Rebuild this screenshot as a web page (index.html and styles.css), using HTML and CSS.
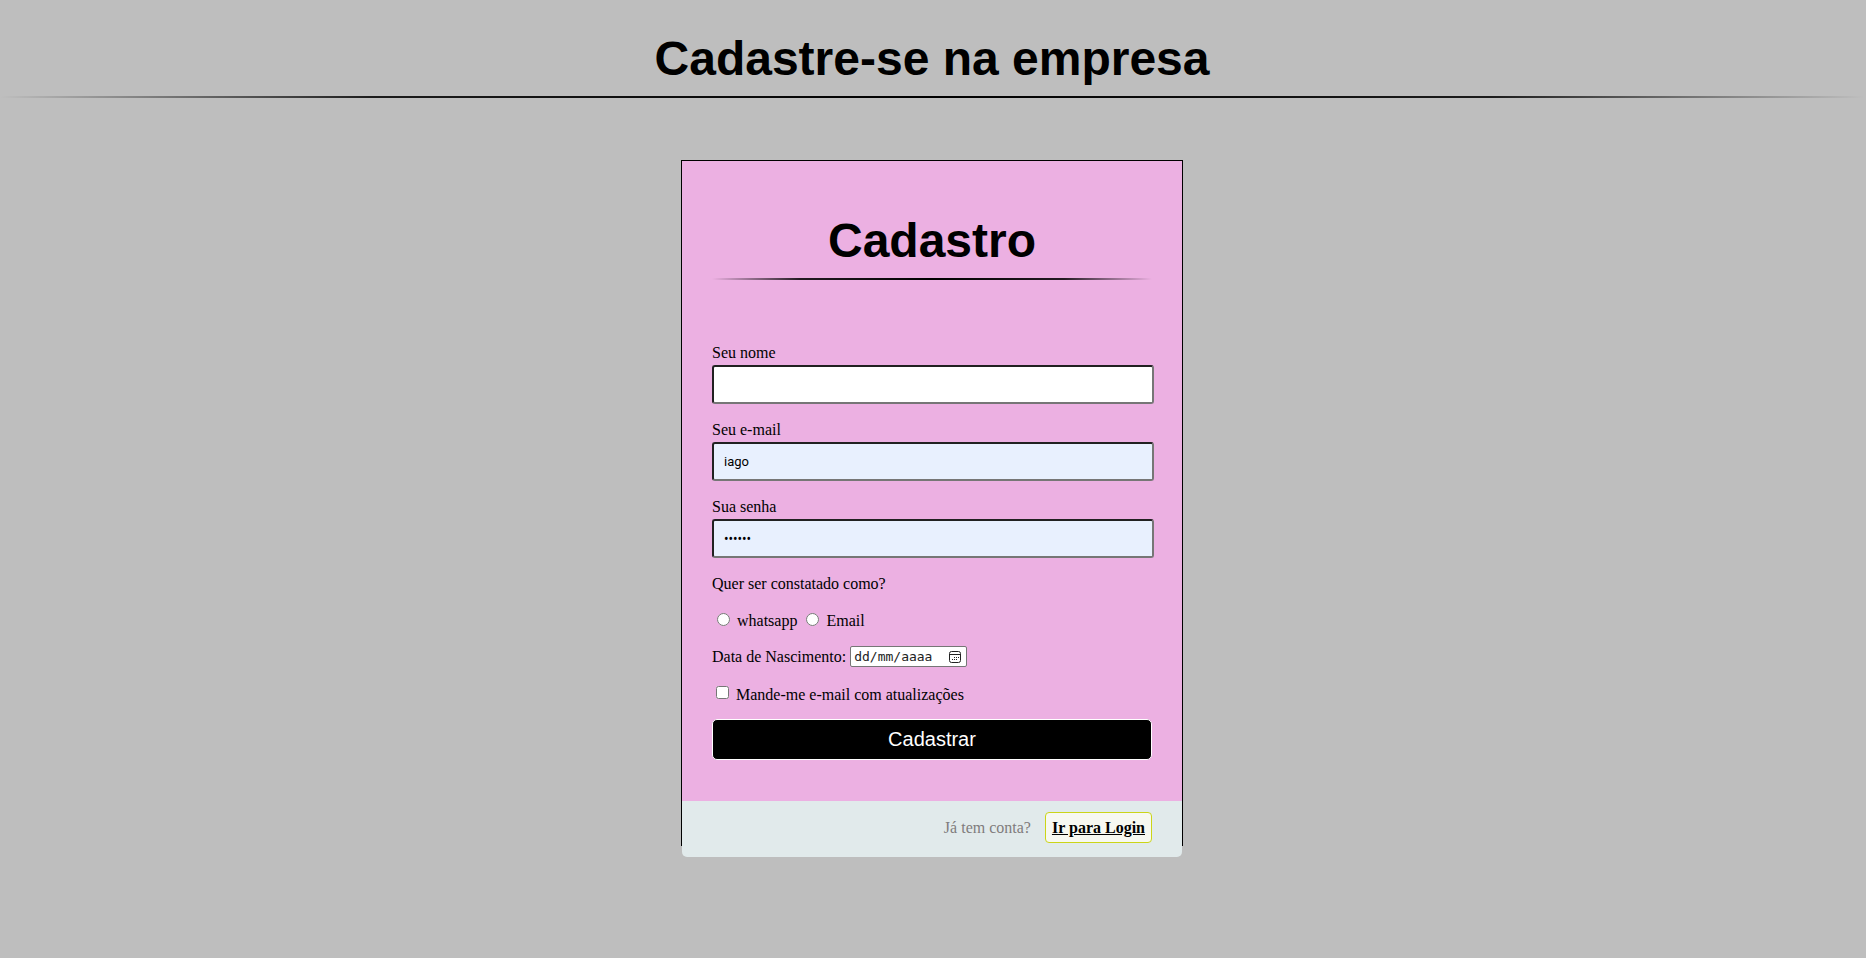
FILE: index.html
```html
<!DOCTYPE html>
<html lang="pt-BR">
<head>
<meta charset="utf-8">
<title>Cadastro</title>
<link rel="stylesheet" href="styles.css">
</head>
<body>
<header class="page-header">
  <h1 class="title">Cadastre-se na empresa</h1>
</header>
<main class="card">
  <form class="form">
    <h1 class="title form-title">Cadastro</h1>
    <div class="field">
      <label for="nome">Seu nome</label>
      <input class="text-input" id="nome" type="text">
    </div>
    <div class="field">
      <label for="email">Seu e-mail</label>
      <input class="text-input filled" id="email" type="text" value="iago">
    </div>
    <div class="field">
      <label for="senha">Sua senha</label>
      <input class="text-input filled password" id="senha" type="password" value="123456">
    </div>
    <p class="question">Quer ser constatado como?</p>
    <div class="row radios">
      <input class="choice" type="radio" id="whatsapp" name="contato"><label for="whatsapp">whatsapp</label>
      <input class="choice" type="radio" id="contato-email" name="contato"><label for="contato-email">Email</label>
    </div>
    <div class="row birth">
      <label for="nascimento">Data de Nascimento:</label>
      <div class="date-box">
        <input class="date-input" id="nascimento" type="text" placeholder="dd/mm/aaaa">
        <button class="date-button" type="button" aria-label="Abrir calendário">
          <svg width="12" height="12" viewBox="0 0 12 12" fill="none" stroke="#222">
            <rect x="0.5" y="0.5" width="11" height="11" rx="2"/>
            <path d="M1 3.5h10"/>
            <path d="M5 6.5h1M7 6.5h1M9 6.5h1M3 8.5h1M5 8.5h1M7 8.5h1"/>
          </svg>
        </button>
      </div>
    </div>
    <div class="row updates">
      <input class="choice" type="checkbox" id="atualizacoes"><label for="atualizacoes">Mande-me e-mail com atualizações</label>
    </div>
    <button class="submit" type="submit">Cadastrar</button>
  </form>
  <footer class="card-footer">
    <span>Já tem conta?</span>
    <a class="login-link" href="#">Ir para Login</a>
  </footer>
</main>
</body>
</html>
```

FILE: styles.css
```css
* {
  box-sizing: border-box;
}

body {
  min-height: 100vh;
  margin: 0;
  padding-right: 2px;
  background: #bebebe;
  color: #000;
  font: 16px/18px "Liberation Serif", "Times New Roman", serif;
}

.page-header {
  padding-top: 31px;
}

.title {
  margin: 0;
  font: bold 48px/55px "Liberation Sans", Arial, sans-serif;
  text-align: center;
}

.title::after {
  content: "";
  display: block;
  height: 2px;
  margin-top: 10px;
  background: linear-gradient(to right, transparent, rgba(0, 0, 0, 0.85) 20%, #000 50%, rgba(0, 0, 0, 0.85) 80%, transparent);
}

.card {
  width: 502px;
  max-width: 100%;
  margin: 62px auto 0;
  border: 1px solid #000;
  background: #ecb0e2;
}

.form {
  padding: 52px 30px 41px;
}

.form-title {
  margin-bottom: 63px;
}

.field {
  display: flex;
  flex-direction: column;
  gap: 2px;
  margin-bottom: 16px;
  line-height: 20px;
}

.text-input {
  width: calc(100% + 2px);
  height: 39px;
  padding: 0 10px;
  border: 2px inset #767676;
  border-radius: 3px;
  background: #fff;
  color: #000;
  font: 13px Roboto, sans-serif;
}

.filled {
  background: #e8f0fe;
}

.password {
  font: 12px "Noto Sans", sans-serif;
}

.question {
  margin: 0 0 18px;
  line-height: 20px;
}

.row {
  display: flex;
}

.choice {
  width: 13px;
  height: 13px;
  margin: 0 7px 0 5px;
}

.radios {
  margin-bottom: 16px;
}

.radios .choice,
.updates .choice {
  margin-top: 1px;
}

.radios label + .choice {
  margin-left: 9px;
}

.birth {
  align-items: center;
  gap: 4px;
  margin-bottom: 18px;
}

.date-box {
  display: flex;
  align-items: center;
  width: 117px;
  height: 21px;
  padding: 0 5px 0 3px;
  border: 1px solid #767676;
  border-radius: 2px;
  background: #fff;
}

.date-input {
  flex: 1;
  min-width: 0;
  padding: 0;
  border: 0;
  background: none;
  font: 13px "DejaVu Sans Mono", monospace;
}

.date-input::placeholder {
  color: #222;
  opacity: 1;
}

.date-button {
  display: flex;
  padding: 0;
  border: 0;
  background: none;
}

.updates {
  margin-bottom: 14px;
  line-height: 20px;
}

.updates .choice {
  margin-left: 4px;
}

.submit {
  display: block;
  width: 100%;
  height: 41px;
  padding: 0;
  border: 1px solid #fff;
  border-radius: 5px;
  background: #000;
  color: #fff;
  font: 20px "Liberation Sans", Arial, sans-serif;
}

.card-footer {
  display: flex;
  align-items: center;
  justify-content: flex-end;
  gap: 14px;
  margin-bottom: -12px;
  padding: 11px 30px 14px;
  border-radius: 0 0 5px 5px;
  background: #e1eaeb;
  color: #7f7c7c;
}

.login-link {
  padding: 5px 6px;
  border: 1px solid #cbd518;
  border-radius: 4px;
  background: #f7f8f1;
  color: #000;
  font-weight: bold;
  line-height: 19px;
}
```
